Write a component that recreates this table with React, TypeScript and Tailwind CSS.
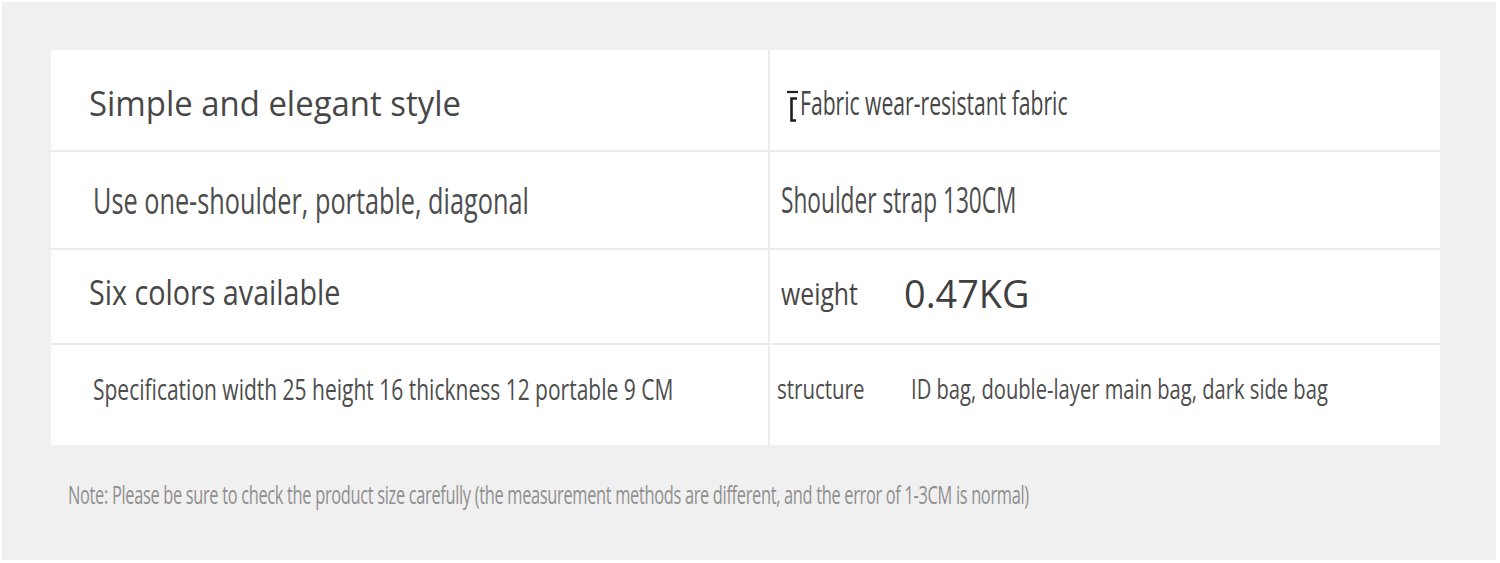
import type { ReactNode } from 'react';

function Cond({ children, className = '' }: { children: ReactNode; className?: string }) {
  return <span className={`inline-block shrink-0 origin-left whitespace-nowrap ${className}`}>{children}</span>;
}

function CursorMark() {
  return (
    <svg width="13" height="38" viewBox="0 0 13 38" className="shrink-0">
      <path d="M0 8h11" stroke="#1f1f1f" strokeWidth="2.2" />
      <path d="M10 14.5H4.5V36.5H9" stroke="#1f1f1f" strokeWidth="2.6" fill="none" />
    </svg>
  );
}

export default function App() {
  const font = { fontFamily: '"Open Sans", "Noto Sans", sans-serif' };

  return (
    <div className="w-[1500px] h-[563px] overflow-hidden bg-white pt-[2px] pl-[2px]" style={font}>
      <div className="w-[1494px] h-[558px] overflow-hidden bg-[#f1f0f0] pl-[49px] pt-[48px]">
        <div className="grid w-[1389px] grid-cols-[717px_670px] grid-rows-[100px_96px_93px_100px] gap-[2px] bg-[#ececec] text-[#474747]">
          <div className="flex items-center bg-white pl-[38px] pt-[6px]">
            <Cond className="scale-x-[0.94] text-[35px]">Simple and elegant style</Cond>
          </div>
          <div className="flex items-center bg-white pl-[17px] pt-[6px]">
            <CursorMark />
            <Cond className="scale-x-[0.66] text-[32px]">Fabric wear-resistant fabric</Cond>
          </div>

          <div className="flex items-center bg-white pl-[42px]">
            <Cond className="scale-x-[0.683] text-[37px] text-[#4d4d4d]">Use one-shoulder, portable, diagonal</Cond>
          </div>
          <div className="flex items-center bg-white pl-[11px]">
            <Cond className="scale-x-[0.63] text-[36px] text-[#4d4d4d]">Shoulder strap 130CM</Cond>
          </div>

          <div className="flex items-center bg-white pl-[38px] pb-[8px]">
            <Cond className="scale-x-[0.82] text-[35px]">Six colors available</Cond>
          </div>
          <div className="flex items-center bg-white pl-[11px] pb-[6px]">
            <Cond className="w-[123px] scale-x-[0.8] text-[31px]">weight</Cond>
            <Cond className="scale-x-[0.97] text-[39px] text-[#3f3f3f]">0.47KG</Cond>
          </div>

          <div className="flex items-center bg-white pl-[42px] pb-[14px]">
            <Cond className="scale-x-[0.7] text-[30px] text-[#4d4d4d]">
              Specification width 25 height 16 thickness 12 portable 9 CM
            </Cond>
          </div>
          <div className="flex items-center bg-white pl-[7px] pb-[14px]">
            <Cond className="w-[134px] scale-x-[0.73] text-[28px] text-[#4d4d4d]">structure</Cond>
            <Cond className="scale-x-[0.72] text-[28px] text-[#4d4d4d]">ID bag, double-layer main bag, dark side bag</Cond>
          </div>
        </div>

        <div className="mt-[30px] w-[1400px] overflow-hidden pl-[17px]">
          <span className="inline-block origin-left scale-x-[0.63] whitespace-nowrap text-[26px] tracking-[-0.5px] text-[#8f8f8f]">
            Note: Please be sure to check the product size carefully (the measurement methods are different, and the error of 1-3CM is normal)
          </span>
        </div>
      </div>
    </div>
  );
}
